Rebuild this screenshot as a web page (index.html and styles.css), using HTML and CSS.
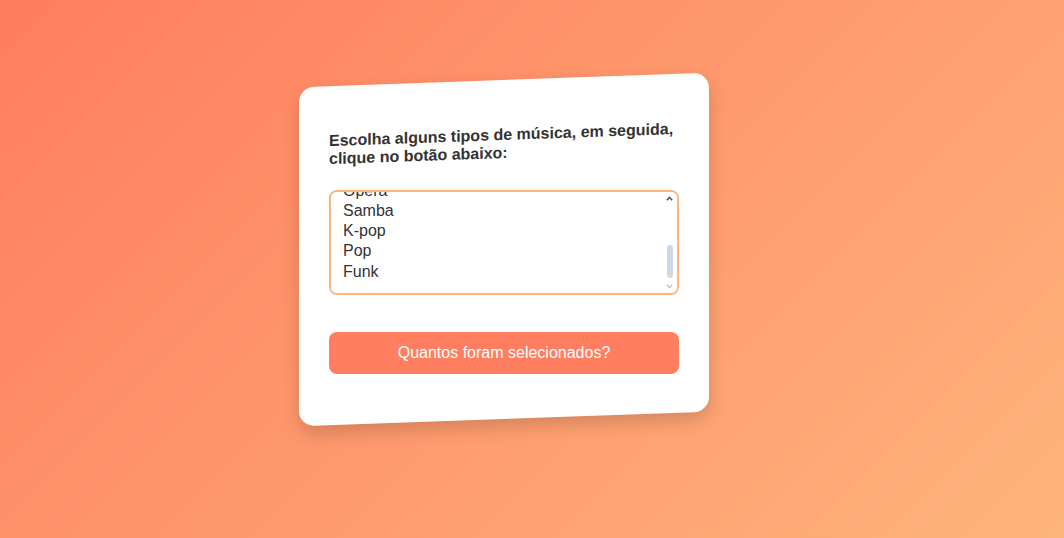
FILE: index.html
```html
<!DOCTYPE html>
<html lang="pt-BR">
<head>
<meta charset="utf-8">
<title>Tipos de música</title>
<link rel="stylesheet" href="styles.css">
</head>
<body>
<main class="page">
  <section class="card">
    <h3 class="title">Escolha alguns tipos de música, em seguida, clique no botão abaixo:</h3>
    <div class="list-wrap">
      <select class="genres" id="genres" multiple>
        <option>Rock</option>
        <option>Jazz</option>
        <option>MPB</option>
        <option>Sertanejo</option>
        <option>Ópera</option>
        <option>Samba</option>
        <option>K-pop</option>
        <option>Pop</option>
        <option>Funk</option>
      </select>
      <div class="fake-scroll" aria-hidden="true">
        <svg class="arrow arrow-up" width="7" height="5" viewBox="0 0 7 5"><polyline points="0.8,4.2 3.5,1.3 6.2,4.2" fill="none" stroke="#505050" stroke-width="1.6"/></svg>
        <span class="thumb"></span>
        <svg class="arrow arrow-down" width="7" height="5" viewBox="0 0 7 5"><polyline points="0.8,0.8 3.5,3.7 6.2,0.8" fill="none" stroke="#c4c4c4" stroke-width="1.4"/></svg>
      </div>
    </div>
    <button class="count-btn" type="button">Quantos foram selecionados?</button>
  </section>
</main>
<script src="script.js"></script>
</body>
</html>
```
FILE: styles.css
```css
html, body {
  margin: 0;
  height: 100%;
}

body {
  background: linear-gradient(135deg, #ff7e5f, #feb47b);
  font-family: "Liberation Sans", Arial, sans-serif;
  color: #333;
}

.page {
  padding: 80px 0 0 299px;
}

.card {
  box-sizing: border-box;
  width: 410px;
  padding: 46px 30px 45px;
  background: #fff;
  border-radius: 15px;
  box-shadow: 0 8px 18px rgba(0, 0, 0, 0.16);
  transform: skewY(-2deg);
  display: flex;
  flex-direction: column;
}

.title {
  margin: 0 0 28px;
  font-size: 16px;
  font-weight: bold;
  color: #333;
}

.list-wrap {
  position: relative;
  height: 105px;
  transform: skewY(2deg);
}

.genres {
  box-sizing: border-box;
  display: block;
  width: 100%;
  height: 105px;
  padding: 10px;
  border: 2px solid #feb47b;
  border-radius: 8px;
  font-family: "Liberation Sans", Arial, sans-serif;
  font-size: 16px;
  color: #333;
  background: #fff;
  outline: none;
  scrollbar-width: none;
}

.fake-scroll {
  position: absolute;
  top: 6px;
  right: 6px;
  width: 7px;
  height: 93px;
  pointer-events: none;
}

.arrow {
  position: absolute;
  left: 0;
}

.arrow-up {
  top: 0;
}

.arrow-down {
  bottom: 0;
}

.thumb {
  position: absolute;
  left: 0.5px;
  top: 49px;
  width: 6px;
  height: 33px;
  border-radius: 3px;
  background: #cfd8e2;
}

.count-btn {
  margin-top: 37px;
  height: 42px;
  border: none;
  border-radius: 8px;
  background: #ff7e5f;
  color: #fff;
  font-family: "Liberation Sans", Arial, sans-serif;
  font-size: 16px;
  cursor: pointer;
  transform: skewY(2deg);
}
```
FILE: script.js
```js
var list = document.getElementById('genres');
list.scrollTop = list.scrollHeight;
```
